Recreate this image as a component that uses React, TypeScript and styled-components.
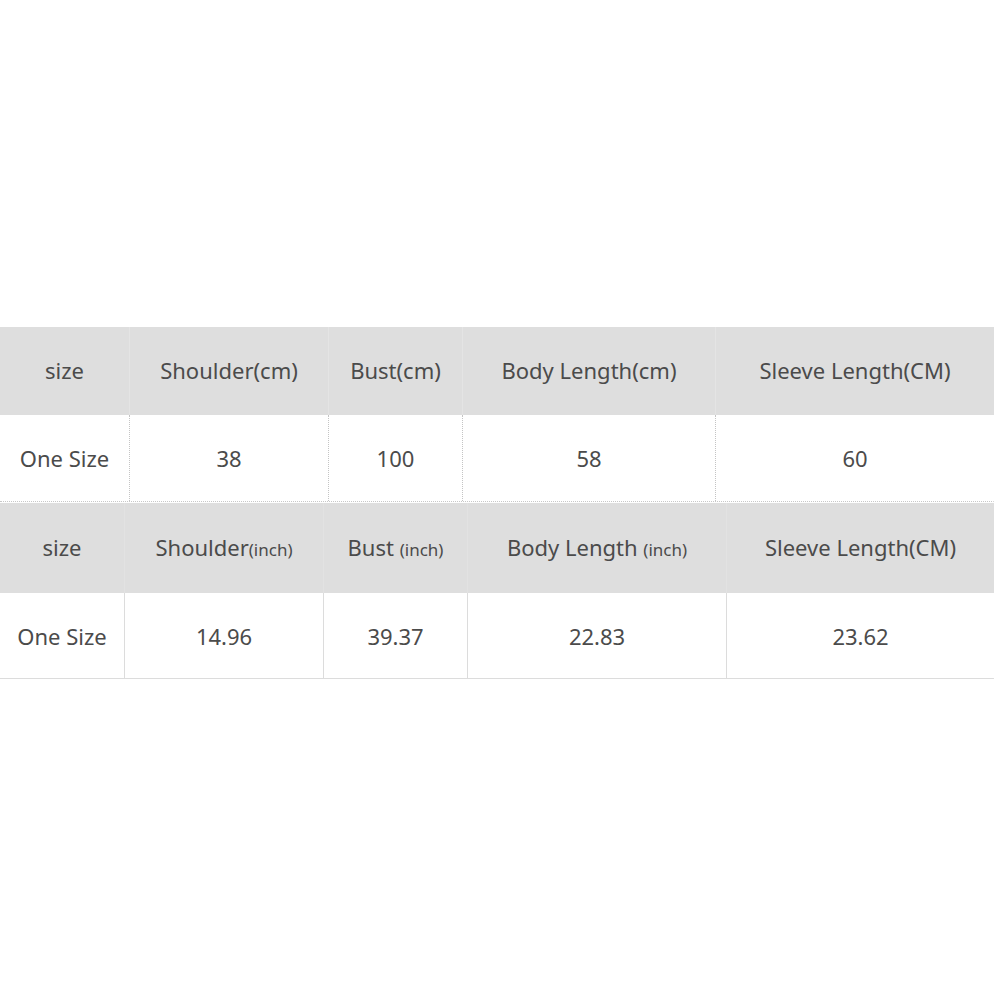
import React from 'react';
import styled, { createGlobalStyle } from 'styled-components';

const GlobalStyle = createGlobalStyle`
  html, body {
    margin: 0;
    padding: 0;
    background: #ffffff;
  }
  body {
    font-family: 'Noto Sans', 'Open Sans', 'Liberation Sans', sans-serif;
    color: #4b4b4b;
  }
`;

interface Column {
  label: string;
  unit?: string;
}

interface SizeTable {
  widths: number[];
  columns: Column[];
  values: string[];
  headHeight: number;
  rowHeight: number;
  dotted: boolean;
}

const tables: SizeTable[] = [
  {
    widths: [129, 199, 134, 253, 279],
    columns: [
      { label: 'size' },
      { label: 'Shoulder(cm)' },
      { label: 'Bust(cm)' },
      { label: 'Body Length(cm)' },
      { label: 'Sleeve Length(CM)' },
    ],
    values: ['One Size', '38', '100', '58', '60'],
    headHeight: 88,
    rowHeight: 86,
    dotted: true,
  },
  {
    widths: [124, 199, 144, 259, 268],
    columns: [
      { label: 'size' },
      { label: 'Shoulder', unit: '(inch)' },
      { label: 'Bust ', unit: '(inch)' },
      { label: 'Body Length ', unit: '(inch)' },
      { label: 'Sleeve Length(CM)' },
    ],
    values: ['One Size', '14.96', '39.37', '22.83', '23.62'],
    headHeight: 90,
    rowHeight: 85,
    dotted: false,
  },
];

const App = () => {
  return (
    <Page>
      <GlobalStyle />
      {tables.map((table, t) => (
        <Table
          key={t}
          $widths={table.widths}
          $head={table.headHeight}
          $row={table.rowHeight}
          $dotted={table.dotted}
        >
          {table.columns.map((col, i) => (
            <HeadCell key={`h${i}`} $dotted={table.dotted}>
              <Label>
                {col.label}
                {col.unit && <Unit>{col.unit}</Unit>}
              </Label>
            </HeadCell>
          ))}
          {table.values.map((value, i) => (
            <Cell key={`c${i}`} $dotted={table.dotted}>
              {value}
            </Cell>
          ))}
        </Table>
      ))}
    </Page>
  );
};

const Page = styled.div`
  width: 1000px;
  height: 1000px;
  padding-top: 327px;
  box-sizing: border-box;
  display: flex;
  flex-direction: column;
  gap: 1px;
`;

const Table = styled.div<{
  $widths: number[];
  $head: number;
  $row: number;
  $dotted: boolean;
}>`
  display: grid;
  width: 994px;
  box-sizing: border-box;
  grid-template-columns: ${p => p.$widths.map(w => `${w}px`).join(' ')};
  grid-template-rows: ${p => p.$head}px ${p => p.$row}px;
  font-size: 22px;
  border-right: 1px ${p => (p.$dotted ? 'dotted #d4d4d4' : 'solid #e0e0e0')};
  border-bottom: 1px ${p => (p.$dotted ? 'dotted #c8c8c8' : 'solid #dcdcdc')};
`;

const CellBase = styled.div`
  display: flex;
  align-items: center;
  justify-content: center;
  white-space: nowrap;
  box-sizing: border-box;
  color: #4b4b4b;
`;

const HeadCell = styled(CellBase)<{ $dotted: boolean }>`
  background: #dedede;
  border-left: 1px solid ${p => (p.$dotted ? '#e4e4e4' : '#e2e2e2')};
  &:nth-child(5n + 1) {
    border-left: none;
  }
`;

const Label = styled.span`
  white-space: pre;
  margin-top: -2px;
`;

const Unit = styled.span`
  font-size: 17px;
`;

const Cell = styled(CellBase)<{ $dotted: boolean }>`
  background: #ffffff;
  border-left: 1px ${p => (p.$dotted ? 'dotted #c4c4c4' : 'solid #dcdcdc')};
  &:nth-child(5n + 1) {
    border-left: none;
  }
`;

export default App;
